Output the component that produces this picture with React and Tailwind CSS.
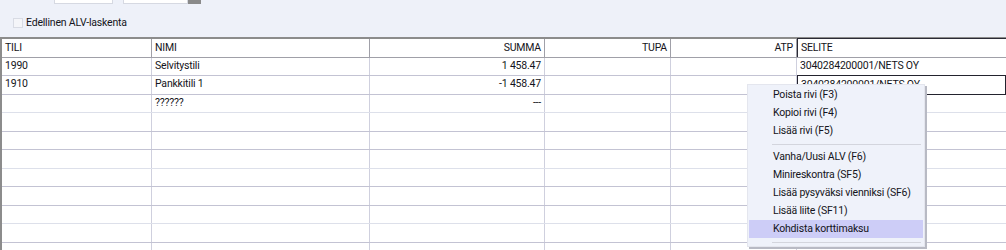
import React from 'react';

const COLS = [
  { key: 'tili', label: 'TILI', w: 'w-[150px]', align: 'text-left' },
  { key: 'nimi', label: 'NIMI', w: 'w-[218px]', align: 'text-left' },
  { key: 'summa', label: 'SUMMA', w: 'w-[175px]', align: 'text-right' },
  { key: 'tupa', label: 'TUPA', w: 'w-[126px]', align: 'text-right' },
  { key: 'atp', label: 'ATP', w: 'w-[126px]', align: 'text-right' },
];

const ROWS = [
  { tili: '1990', nimi: 'Selvitystili', summa: '1 458.47', selite: '3040284200001/NETS OY' },
  { tili: '1910', nimi: 'Pankkitili 1', summa: '-1 458.47', selite: '3040284200001/NETS OY', editing: true },
  { tili: '', nimi: '??????', summa: '---', selite: '' },
  {}, {}, {}, {}, {}, {}, {}, {},
];

const MENU = [
  { label: 'Poista rivi (F3)' },
  { label: 'Kopioi rivi (F4)' },
  { label: 'Lisää rivi (F5)' },
  { sep: true },
  { label: 'Vanha/Uusi ALV (F6)' },
  { label: 'Minireskontra (SF5)' },
  { label: 'Lisää pysyväksi vienniksi (SF6)' },
  { label: 'Lisää liite (SF11)' },
  { label: 'Kohdista korttimaksu', active: true },
  { sep: true },
];

const App = () => {
  return (
    <div
      className="relative w-[1006px] h-[250px] overflow-hidden bg-[#eef1f9] text-[10.5px] tracking-[-0.2px] text-[#141420]"
      style={{ fontFamily: 'Roboto, "Noto Sans", sans-serif' }}
    >
      {/* cut-off inputs at top */}
      <div className="flex h-[4px]">
        <div className="ml-[54px] w-[59px] h-[4px] bg-white border border-t-0 border-[#d6d9e2]" />
        <div className="ml-[10px] w-[65px] h-[4px] bg-white border border-t-0 border-[#d6d9e2]" />
        <div className="w-[13px] h-[4px] bg-[#8a8a8a]" />
      </div>

      {/* checkbox row */}
      <div className="flex items-center h-[33px] pl-[13px] pb-[4px]">
        <div className="w-[10px] h-[10px] bg-[#f4f5f9] border border-[#d8dbe4] mt-[8px]" />
        <span className="ml-[3px] mt-[10px] leading-none whitespace-nowrap">Edellinen ALV-laskenta</span>
      </div>

      {/* grid */}
      <div className="border-t-2 border-l-2 border-[#8c8c8c] bg-white">
        <div className="flex h-[19px] border-b border-[#a0a0a8]">
          {COLS.map((c) => (
            <div
              key={c.key}
              className={`${c.w} shrink-0 border-r border-[#a0a0a8] px-[3px] leading-[17px] whitespace-nowrap ${c.align}`}
            >
              {c.label}
            </div>
          ))}
          <div className="flex-1 border-l border-t border-[#2a2a35] -mt-[1px] px-[3px] leading-[18px]">SELITE</div>
        </div>
        {ROWS.map((r, i) => (
          <div
            key={i}
            className={`flex ${i % 2 === 0 ? 'h-[18px]' : 'h-[19px]'} border-b ${i % 3 === 2 ? 'border-[#dde0ea]' : 'border-[#c3c3d3]'}`}
          >
            {COLS.map((c) => (
              <div
                key={c.key}
                className={`${c.w} shrink-0 border-r border-[#cfd0de] px-[3px] leading-[15px] whitespace-nowrap ${c.align}`}
              >
                {r[c.key] || ''}
              </div>
            ))}
            <div
              className={`flex-1 px-[3px] leading-[15px] whitespace-nowrap ${r.editing ? 'border border-[#23232e] -mb-[1px] -mt-[1px] pt-[1px]' : ''}`}
            >
              {r.selite || ''}
            </div>
          </div>
        ))}
      </div>

      {/* context menu */}
      <div className="absolute left-[747px] top-[84px] w-[178px] pt-[1px] bg-[#eff2fa] border border-[#e4e6ee] shadow-[2px_2px_0_0_#b8bac4]">
        {MENU.map((m, i) =>
          m.sep ? (
            <div key={i} className="h-[8px] flex items-center pl-[24px] pr-[3px]">
              <div className="h-[1px] w-full bg-[#d3d5dd]" />
            </div>
          ) : (
            <div
              key={i}
              className={`h-[18px] leading-[18px] pl-[24px] mx-[1px] whitespace-nowrap ${m.active ? 'bg-[#cdcdf7]' : ''}`}
            >
              {m.label}
            </div>
          )
        )}
      </div>
    </div>
  );
};

export default App;
